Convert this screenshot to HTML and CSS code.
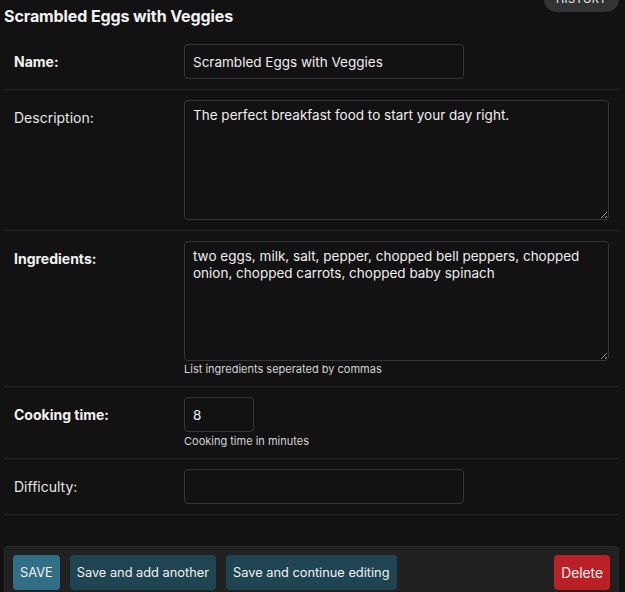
FILE: index.html
```html
<!DOCTYPE html>
<html lang="en">
<head>
<meta charset="utf-8">
<title>Change recipe</title>
<link rel="stylesheet" href="styles.css">
</head>
<body>
<div class="content">
  <div class="header">
    <h1>Scrambled Eggs with Veggies</h1>
    <a class="history-link" href="#">History</a>
  </div>
  <form class="change-form">
    <fieldset class="module aligned">
      <div class="form-row">
        <div class="field">
          <label class="required" for="id_name">Name:</label>
          <input class="input input-text" id="id_name" type="text" value="Scrambled Eggs with Veggies">
        </div>
      </div>
      <div class="form-row">
        <div class="field">
          <label for="id_description">Description:</label>
          <textarea class="textarea" id="id_description">The perfect breakfast food to start your day right.</textarea>
        </div>
      </div>
      <div class="form-row">
        <div class="field">
          <label class="required" for="id_ingredients">Ingredients:</label>
          <div class="field-box">
            <textarea class="textarea" id="id_ingredients">two eggs, milk, salt, pepper, chopped bell peppers, chopped onion, chopped carrots, chopped baby spinach</textarea>
            <div class="help">List ingredients seperated by commas</div>
          </div>
        </div>
      </div>
      <div class="form-row">
        <div class="field">
          <label class="required" for="id_cooking_time">Cooking time:</label>
          <div class="field-box">
            <input class="input input-number" id="id_cooking_time" type="text" value="8">
            <div class="help help-input">Cooking time in minutes</div>
          </div>
        </div>
      </div>
      <div class="form-row">
        <div class="field">
          <label for="id_difficulty">Difficulty:</label>
          <input class="input input-text" id="id_difficulty" type="text" value="">
        </div>
      </div>
    </fieldset>
    <div class="submit-row">
      <button type="button" class="btn btn-default">SAVE</button>
      <button type="button" class="btn">Save and add another</button>
      <button type="button" class="btn">Save and continue editing</button>
      <button type="button" class="btn btn-delete">Delete</button>
    </div>
  </form>
</div>
</body>
</html>
```
FILE: styles.css
```css
html, body {
  margin: 0;
  padding: 0;
  background: #121212;
  color: #eeeeee;
  font-family: Inter, "Noto Sans", sans-serif;
  font-size: 14px;
  overflow: hidden;
}

.content {
  padding: 0 6px 0 4px;
}

.header {
  display: flex;
  justify-content: space-between;
  align-items: flex-start;
  height: 34px;
}

.header h1 {
  margin: 6px 0 0;
  font-size: 16px;
  line-height: 20px;
  font-weight: 700;
  color: #f2f2f2;
  letter-spacing: -0.1px;
}

.history-link {
  display: block;
  margin-top: -14px;
  height: 26px;
  line-height: 26px;
  width: 75px;
  box-sizing: border-box;
  text-align: center;
  border-radius: 15px;
  background: #333333;
  color: #f0f0f0;
  font-size: 11px;
  text-transform: uppercase;
  letter-spacing: 0.5px;
  text-decoration: none;
}

.change-form {
  margin: 0;
}

.module {
  margin: 0 0 31px;
  padding: 0;
  border: none;
  min-width: 0;
}

.form-row {
  padding: 10px;
  border-bottom: 1px solid #272727;
}

.field {
  display: flex;
  align-items: flex-start;
}

.field label {
  width: 160px;
  padding: 8px 10px 0 0;
  line-height: 20px;
  font-size: 14px;
  color: #e6e6e6;
  flex: none;
}

.field label.required {
  font-weight: 700;
  color: #f2f2f2;
}

.field-box {
  display: flex;
  flex-direction: column;
}

.input,
.textarea {
  box-sizing: border-box;
  background: #121212;
  color: #eeeeee;
  border: 1px solid #353535;
  border-radius: 4px;
  font-family: Inter, "Noto Sans", sans-serif;
  font-size: 13.5px;
  margin: 0;
  outline: none;
}

.input {
  height: 35px;
  padding: 0 8px;
}

.input-text {
  width: 280px;
}

.input-number {
  width: 70px;
}

.textarea {
  display: block;
  width: 425px;
  height: 120px;
  padding: 6px 8px;
  line-height: 17px;
  resize: vertical;
}

.help {
  margin-top: 2px;
  font-size: 11px;
  line-height: 13px;
  color: #d4d4d4;
}

.help-input {
  margin-top: 3px;
}

.submit-row {
  display: flex;
  gap: 10px;
  padding: 8px;
  background: #212121;
  border: 1px solid #272727;
  border-radius: 4px;
}

.btn {
  height: 35px;
  padding: 0 7px;
  border: none;
  border-radius: 4px;
  background: #1f4452;
  color: #f2f2f2;
  font-family: Inter, "Noto Sans", sans-serif;
  font-size: 12.8px;
  cursor: pointer;
}

.btn-default {
  background: #336e87;
}

.btn-delete {
  margin-left: auto;
  background: #ba2126;
  font-size: 13.8px;
}
```
